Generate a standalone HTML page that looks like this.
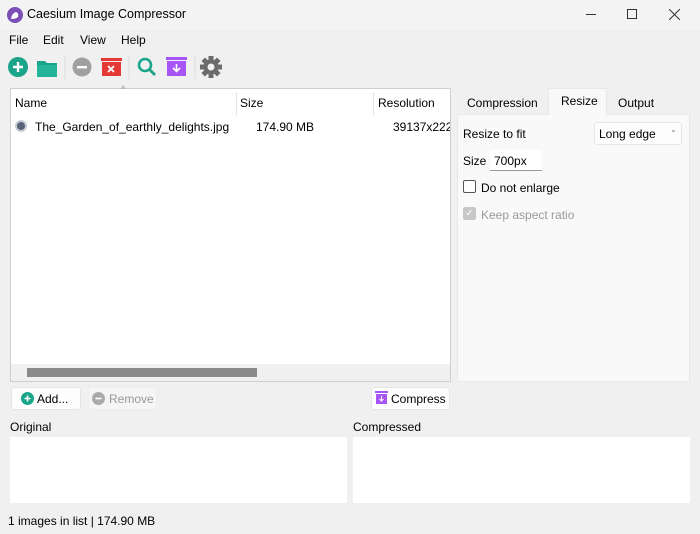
<!DOCTYPE html>
<html><head><style>
*{margin:0;padding:0;box-sizing:border-box}
body{width:700px;height:534px;background:#f0f0f0;font-family:"Segoe UI","Liberation Sans",sans-serif;font-size:12px;color:#000;position:relative;overflow:hidden}
.a{position:absolute}
.title{left:0;top:0;width:700px;height:30px;background:#f3f3f3}
.btn{background:#fdfdfd;border:1px solid #e6e6e6;border-radius:3px}
</style></head><body>
<div class="a title"></div>
<svg class="a" style="left:7px;top:7px" width="16" height="16"><circle cx="8" cy="8" r="8" fill="#7b4fb5"/><path d="M4 12 Q5 6 9 5 Q12 6 11 10 Q9 12 4 12Z" fill="#fff"/></svg>
<div class="a" style="left:27px;top:7px;font-size:12.5px">Caesium Image Compressor</div>
<div class="a" style="left:586px;top:14px;width:10px;height:1px;background:#333"></div>
<div class="a" style="left:627px;top:9px;width:10px;height:10px;border:1px solid #333"></div>
<svg class="a" style="left:669px;top:9px" width="11" height="11"><path d="M0 0L11 11M11 0L0 11" stroke="#333"/></svg>
<div class="a" style="left:9px;top:33px">File</div>
<div class="a" style="left:43px;top:33px">Edit</div>
<div class="a" style="left:80px;top:33px">View</div>
<div class="a" style="left:121px;top:33px">Help</div>
<svg class="a" style="left:0;top:52px" width="230" height="30">
<circle cx="18" cy="15" r="10" fill="#1aa58a"/><path d="M18 10v10M13 15h10" stroke="#fff" stroke-width="2.4"/>
<path d="M37 9h8l2 2h10v14h-20z" fill="#1aa58a"/><rect x="37" y="13" width="20" height="12" fill="#22b59a"/>
<line x1="65" y1="4" x2="65" y2="27" stroke="#ddd"/>
<circle cx="82" cy="15" r="9.5" fill="#a0a0a0"/><rect x="77" y="14" width="10" height="2.4" fill="#fff"/>
<rect x="101" y="6" width="21" height="3" fill="#e53935"/><rect x="102" y="10" width="19" height="14" fill="#e53935"/><path d="M108 14l6 6M114 14l-6 6" stroke="#fff" stroke-width="1.8"/>
<line x1="129" y1="4" x2="129" y2="27" stroke="#ddd"/>
<circle cx="145" cy="13" r="6" fill="none" stroke="#1aa58a" stroke-width="2.6"/><path d="M149 17l6 6" stroke="#1aa58a" stroke-width="3"/>
<rect x="166" y="5" width="21" height="3" fill="#a855f7"/><rect x="167" y="9" width="19" height="15" fill="#a855f7"/><path d="M176.5 12v7M173 16l3.5 3.5 3.5-3.5" stroke="#fff" stroke-width="1.6" fill="none"/>
<line x1="195" y1="4" x2="195" y2="27" stroke="#ddd"/>
<g transform="translate(211 15)"><circle r="7.5" fill="#6b6b6b"/><g fill="#6b6b6b"><rect x="-2.5" y="-11" width="5" height="22"/><rect x="-2.5" y="-11" width="5" height="22" transform="rotate(45)"/><rect x="-2.5" y="-11" width="5" height="22" transform="rotate(90)"/><rect x="-2.5" y="-11" width="5" height="22" transform="rotate(135)"/></g><circle r="3.5" fill="#f0f0f0"/></g>
</svg>
<div class="a" style="left:10px;top:88px;width:441px;height:294px;background:#fff;border:1px solid #cfcfcf"></div>
<div class="a" style="left:121px;top:84px;font-size:9px;color:#888">^</div>
<div class="a" style="left:236px;top:92px;width:1px;height:24px;background:#e5e5e5"></div>
<div class="a" style="left:373px;top:92px;width:1px;height:24px;background:#e5e5e5"></div>
<div class="a" style="left:15px;top:96px">Name</div>
<div class="a" style="left:240px;top:96px">Size</div>
<div class="a" style="left:378px;top:96px">Resolution</div>
<div class="a" style="left:15px;top:120px;width:12px;height:12px;border-radius:50%;background:#5a6478;border:2px solid #c6ccd6"></div>
<div class="a" style="left:35px;top:120px">The_Garden_of_earthly_delights.jpg</div>
<div class="a" style="left:256px;top:120px">174.90 MB</div>
<div class="a" style="left:393px;top:120px;width:57px;overflow:hidden;white-space:nowrap">39137x22223</div>
<div class="a" style="left:11px;top:364px;width:439px;height:17px;background:#f0f0f0"></div>
<div class="a" style="left:27px;top:368px;width:230px;height:9px;background:#8a8a8a"></div>
<div class="a" style="left:457px;top:114px;width:233px;height:268px;background:#f9f9f9;border:1px solid #e8e8e8"></div>
<div class="a" style="left:548px;top:88px;width:59px;height:27px;background:#f9f9f9;border:1px solid #e8e8e8;border-bottom:none"></div>
<div class="a" style="left:467px;top:96px">Compression</div>
<div class="a" style="left:561px;top:94px">Resize</div>
<div class="a" style="left:618px;top:96px">Output</div>
<div class="a" style="left:463px;top:127px">Resize to fit</div>
<div class="a btn" style="left:594px;top:122px;width:88px;height:23px"></div>
<div class="a" style="left:599px;top:127px">Long edge</div>
<div class="a" style="left:670px;top:125px;font-size:8px;color:#777">&#8964;</div>
<div class="a" style="left:463px;top:154px">Size</div>
<div class="a" style="left:490px;top:150px;width:52px;height:21px;background:#fff;border-bottom:1px solid #999"></div>
<div class="a" style="left:494px;top:154px">700px</div>
<div class="a" style="left:463px;top:180px;width:13px;height:13px;border:1px solid #555;border-radius:2px;background:#fff"></div>
<div class="a" style="left:481px;top:181px">Do not enlarge</div>
<div class="a" style="left:463px;top:207px;width:13px;height:13px;border-radius:2px;background:#c8c8c8;color:#fff;font-size:10px;line-height:13px;text-align:center">✓</div>
<div class="a" style="left:481px;top:208px;color:#9a9a9a">Keep aspect ratio</div>
<div class="a btn" style="left:11px;top:387px;width:70px;height:23px"></div>
<svg class="a" style="left:21px;top:392px" width="13" height="13"><circle cx="6.5" cy="6.5" r="6.5" fill="#1aa58a"/><path d="M6.5 3.5v6M3.5 6.5h6" stroke="#fff" stroke-width="1.6"/></svg>
<div class="a" style="left:37px;top:392px">Add...</div>
<div class="a" style="left:88px;top:387px;width:69px;height:23px;background:#f5f5f5;border:1px solid #eee;border-radius:3px"></div>
<svg class="a" style="left:92px;top:392px" width="13" height="13"><circle cx="6.5" cy="6.5" r="6.5" fill="#aaa"/><rect x="3.5" y="5.7" width="6" height="1.6" fill="#fff"/></svg>
<div class="a" style="left:109px;top:392px;color:#999">Remove</div>
<div class="a btn" style="left:371px;top:387px;width:79px;height:23px"></div>
<svg class="a" style="left:375px;top:391px" width="13" height="14"><rect x="0" y="0" width="13" height="2" fill="#a855f7"/><rect x="1" y="3" width="11" height="10" fill="#a855f7"/><path d="M6.5 5v5M4.5 8l2 2 2-2" stroke="#fff" fill="none"/></svg>
<div class="a" style="left:391px;top:392px">Compress</div>
<div class="a" style="left:10px;top:420px">Original</div>
<div class="a" style="left:353px;top:420px">Compressed</div>
<div class="a" style="left:10px;top:437px;width:337px;height:66px;background:#fff"></div>
<div class="a" style="left:353px;top:437px;width:337px;height:66px;background:#fff"></div>
<div class="a" style="left:8px;top:514px">1 images in list | 174.90 MB</div>
</body></html>
